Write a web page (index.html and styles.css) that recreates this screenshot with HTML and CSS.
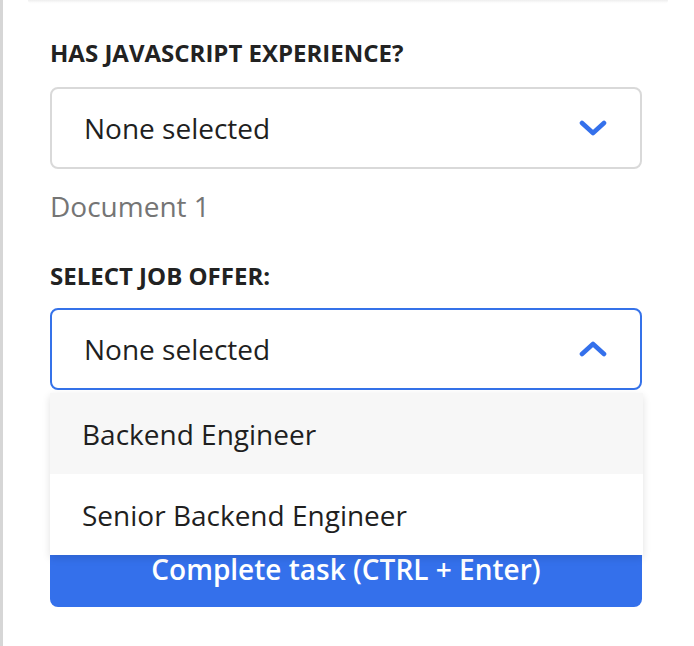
FILE: index.html
```html
<!DOCTYPE html>
<html lang="en">
<head>
<meta charset="utf-8">
<title>Task form</title>
<link rel="stylesheet" href="styles.css">
</head>
<body>
<div class="page">
  <div class="top-edge"></div>
  <form class="form">
    <label class="label label-first">HAS JAVASCRIPT EXPERIENCE?</label>
    <div class="select">
      <span class="select-value">None selected</span>
      <svg class="chevron" viewBox="0 0 28 16" width="28" height="16"><path d="M3 3 L14 13 L25 3" fill="none" stroke="#3470eb" stroke-width="4.6" stroke-linecap="round" stroke-linejoin="round"/></svg>
    </div>
    <div class="hint">Document 1</div>

    <label class="label label-second">SELECT JOB OFFER:</label>
    <div class="select-wrap">
      <div class="select select-open">
        <span class="select-value">None selected</span>
        <svg class="chevron" viewBox="0 0 28 16" width="28" height="16"><path d="M3 13 L14 3 L25 13" fill="none" stroke="#3470eb" stroke-width="4.6" stroke-linecap="round" stroke-linejoin="round"/></svg>
      </div>
      <ul class="menu">
        <li class="menu-item menu-item-active">Backend Engineer</li>
        <li class="menu-item">Senior Backend Engineer</li>
      </ul>
    </div>

    <button type="button" class="submit">Complete task (CTRL + Enter)</button>
  </form>
</div>
</body>
</html>
```

FILE: styles.css
```css
html, body {
  margin: 0;
  padding: 0;
  background: #ffffff;
}

body {
  font-family: "Open Sans", "Noto Sans", sans-serif;
  color: #222222;
}

.page {
  min-height: 646px;
  box-sizing: border-box;
  border-left: 3px solid #d6d6d6;
  padding: 0 52px 0 47px;
  position: relative;
}

.top-edge {
  height: 4px;
  margin: 0 -26px 0 -22px;
  background: linear-gradient(#eeeeee, #fbfbfb 60%, #ffffff);
  border-radius: 0 0 4px 4px;
}

.form {
  display: flex;
  flex-direction: column;
}

.label {
  display: block;
  font-size: 24px;
  font-weight: 700;
  line-height: 32px;
  color: #222222;
  letter-spacing: 0;
}

.label-first {
  margin-top: 33px;
}

.label-second {
  margin-top: 35px;
}

.select {
  margin-top: 18px;
  height: 82px;
  box-sizing: border-box;
  border: 2px solid #d9d9d9;
  border-radius: 8px;
  display: flex;
  align-items: center;
  justify-content: space-between;
  padding: 0 33px 0 32px;
  font-size: 28px;
  line-height: 38px;
  color: #1f1f1f;
  background: #ffffff;
}

.select-wrap {
  position: relative;
  margin-top: 16px;
}

.select-open {
  border-color: #3572e9;
  margin-top: 0;
}

.chevron {
  display: block;
}

.hint {
  margin-top: 18px;
  font-size: 28px;
  line-height: 38px;
  color: #757575;
}

.menu {
  position: absolute;
  left: 0;
  right: -1px;
  top: 85px;
  margin: 0;
  padding: 0;
  list-style: none;
  background: #ffffff;
  box-shadow: 0 3px 8px rgba(0, 0, 0, 0.12);
  z-index: 2;
}

.menu-item {
  height: 81px;
  display: flex;
  align-items: center;
  padding-left: 32px;
  font-size: 28px;
  color: #1f1f1f;
}

.menu-item-active {
  background: #f7f7f7;
}

.submit {
  margin-top: 141px;
  height: 76px;
  border: none;
  border-radius: 8px;
  background: #3470eb;
  color: #ffffff;
  font-family: "Open Sans", "Noto Sans", sans-serif;
  font-size: 28px;
  font-weight: 600;
  padding: 0;
  cursor: pointer;
}
```
